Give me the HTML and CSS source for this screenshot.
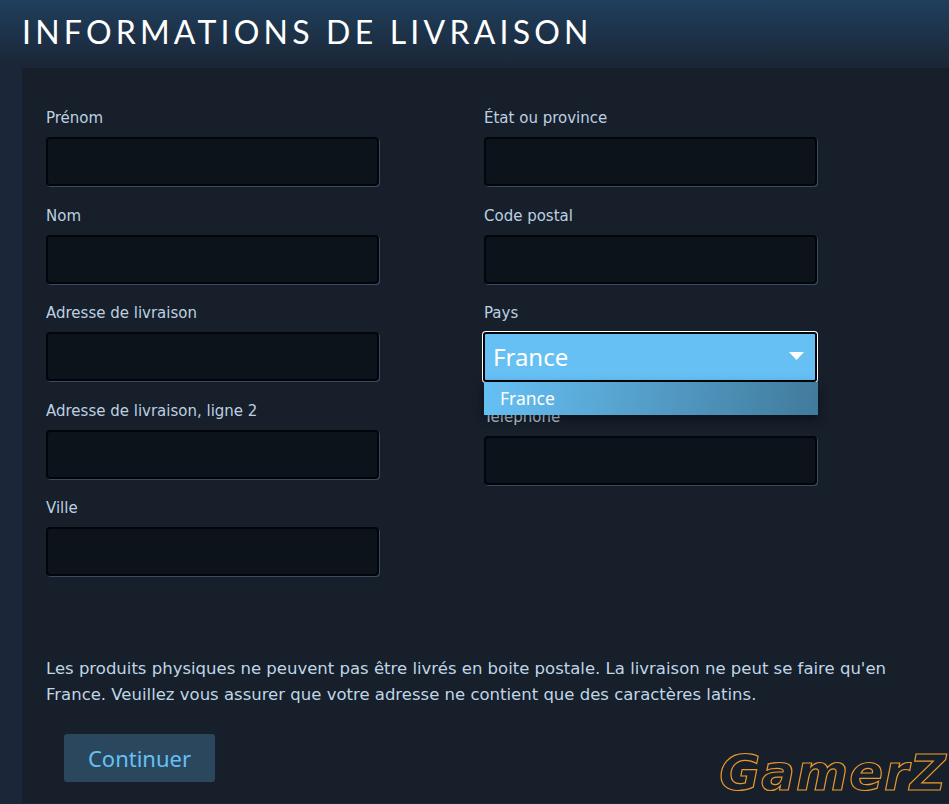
FILE: index.html
```html
<!DOCTYPE html>
<html lang="fr">
<head>
  <meta charset="UTF-8">
  <meta name="viewport" content="width=device-width, initial-scale=1.0">
  <title>Informations de livraison</title>
  <link rel="stylesheet" href="styles.css">
</head>
<body>
  <div class="page">
    <h1>Informations de livraison</h1>

    <div class="panel">
      <div class="form-columns">
        <div class="form-column">
          <div class="field">
            <label for="first-name">Prénom</label>
            <input id="first-name" type="text">
          </div>
          <div class="field">
            <label for="last-name">Nom</label>
            <input id="last-name" type="text">
          </div>
          <div class="field">
            <label for="address">Adresse de livraison</label>
            <input id="address" type="text">
          </div>
          <div class="field">
            <label for="address-2">Adresse de livraison, ligne 2</label>
            <input id="address-2" type="text">
          </div>
          <div class="field">
            <label for="city">Ville</label>
            <input id="city" type="text">
          </div>
        </div>

        <div class="form-column">
          <div class="field">
            <label for="state">État ou province</label>
            <input id="state" type="text">
          </div>
          <div class="field">
            <label for="zip">Code postal</label>
            <input id="zip" type="text">
          </div>
          <div class="field field-select">
            <label>Pays</label>
            <div class="select-box">
              <span>France</span>
              <svg class="select-arrow" width="15" height="8" viewBox="0 0 15 8"><path d="M0 0h15L7.5 8z" fill="#fff"/></svg>
            </div>
            <div class="select-menu">France</div>
          </div>
          <div class="field">
            <label for="phone">Téléphone</label>
            <input id="phone" type="text">
          </div>
        </div>
      </div>

      <p class="notice">Les produits physiques ne peuvent pas être livrés en boite postale. La livraison ne peut se faire qu'en France. Veuillez vous assurer que votre adresse ne contient que des caractères latins.</p>

      <button class="continue-btn">Continuer</button>
      <div class="watermark">GamerZ</div>
    </div>
  </div>
</body>
</html>
```

FILE: styles.css
```css
* {
  box-sizing: border-box;
}

html, body {
  height: 100%;
}

body {
  margin: 0;
  overflow: hidden;
  background-color: #1b2738;
  background-image: linear-gradient(to bottom, #1f3f5c 0, #1b2738 64px);
  font-family: "DejaVu Sans", sans-serif;
  color: #acb2b8;
}

.page {
  padding-left: 22px;
}

h1 {
  margin: 0;
  height: 68px;
  padding-top: 12px;
  font-family: "Lato", sans-serif;
  font-size: 32px;
  line-height: 40px;
  font-weight: 400;
  letter-spacing: 4.2px;
  text-transform: uppercase;
  color: #fff;
}

.panel {
  position: relative;
  height: 735px;
  padding: 40px 24px 0;
  background-color: #171f2b;
}

.form-columns {
  display: flex;
  gap: 104px;
}

.form-column {
  width: 334px;
}

.field {
  height: 97.5px;
}

.field-select {
  position: relative;
  height: 103.5px;
}

label {
  display: block;
  height: 29px;
  font-size: 15px;
  line-height: 20px;
  color: #bcd0e0;
}

input {
  display: block;
  width: 333px;
  height: 49px;
  background-color: #0d131b;
  border: 2px solid #02050a;
  border-radius: 4px;
  box-shadow: 1px 1px 0 #3a4a60;
  outline: none;
}

.select-box {
  position: relative;
  display: flex;
  align-items: center;
  justify-content: space-between;
  width: 336px;
  height: 52px;
  margin: -1px 0 0 -2px;
  padding: 0 14px 2px 11px;
  background-color: #66c0f4;
  border-radius: 4px;
  box-shadow: inset 0 0 0 1px #fff, inset 0 0 0 3px #02050a;
  font-family: "Noto Sans", sans-serif;
  font-size: 24px;
  color: #fff;
}

.select-menu {
  position: absolute;
  z-index: 2;
  top: 79px;
  left: 0;
  width: 334px;
  height: 33px;
  padding-left: 16px;
  background: linear-gradient(100deg, #66c0f4 0, #417a9b 100%);
  box-shadow: 0 4px 10px rgba(0, 0, 0, 0.45);
  font-family: "Noto Sans", sans-serif;
  font-size: 17.5px;
  line-height: 32px;
  color: #fff;
}

.notice {
  margin: 0;
  padding-top: 60px;
  font-size: 16.5px;
  line-height: 26px;
  color: #bfd6e6;
}

.continue-btn {
  display: block;
  width: 151px;
  height: 48px;
  margin: 26px 0 0 18px;
  padding: 0;
  background-color: #2a475e;
  border: none;
  border-radius: 3px;
  font-family: "Noto Sans", sans-serif;
  font-size: 22px;
  color: #66c0f4;
}

.watermark {
  position: absolute;
  right: 2px;
  bottom: -1px;
  font-family: "DejaVu Sans", sans-serif;
  font-size: 50px;
  line-height: 62px;
  font-weight: 700;
  font-style: italic;
  letter-spacing: 1px;
  color: #171f2b;
  -webkit-text-stroke: 1.2px #e8982c;
}
```
